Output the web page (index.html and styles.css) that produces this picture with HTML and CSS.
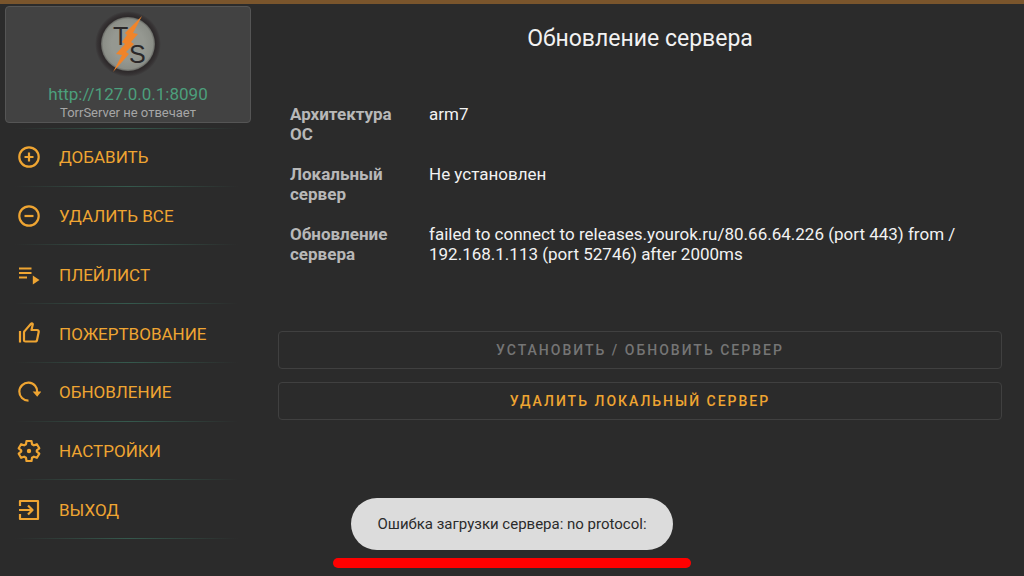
FILE: index.html
```html
<!DOCTYPE html>
<html lang="ru">

<head>
    <meta charset="UTF-8">
    <meta name="viewport" content="width=device-width, initial-scale=1.0">
    <title>TorrServer</title>
    <link rel="stylesheet" href="styles.css">
</head>

<body>
    <div class="status-bar"></div>
    <div class="app">
        <aside class="sidebar">
            <div class="server-card">
                <svg class="logo" viewBox="0 0 66 66" role="img" aria-label="TorrServer">
                    <defs>
                        <radialGradient id="rim">
                            <stop offset="0.84" stop-color="#2e2a2b" />
                            <stop offset="0.93" stop-color="#373435" />
                            <stop offset="1" stop-color="#424242" />
                        </radialGradient>
                        <radialGradient id="face">
                            <stop offset="0.6" stop-color="#959891" />
                            <stop offset="0.92" stop-color="#8b8e87" />
                            <stop offset="1" stop-color="#62635f" />
                        </radialGradient>
                    </defs>
                    <circle cx="33" cy="33" r="33" fill="url(#rim)" />
                    <circle cx="33" cy="33" r="27" fill="url(#face)" />
                    <text class="logo-letter" x="18" y="34">T</text>
                    <text class="logo-letter" x="34" y="52">S</text>
                    <path d="M47 5 L30 22 L32 24 L27 31 L30 33 L21 43 L27 44 L18 61 L34 43 L31 41 L39 33 L36 31 L43 23 L38 22 Z" fill="#f0842a" />
                </svg>
                <div class="server-url">http://127.0.0.1:8090</div>
                <div class="server-status">TorrServer не отвечает</div>
            </div>
            <nav class="menu">
                <button class="menu-item">
                    <svg class="icon" viewBox="0 0 24 24"><circle cx="12" cy="12" r="9.7" /><path d="M12 7.5v9M7.5 12h9" /></svg>
                    Добавить
                </button>
                <button class="menu-item">
                    <svg class="icon" viewBox="0 0 24 24"><circle cx="12" cy="12" r="9.7" /><path d="M7.5 12h9" /></svg>
                    Удалить все
                </button>
                <button class="menu-item">
                    <svg class="icon" viewBox="0 0 24 24"><path d="M2 5.500h12.500M2 10h12.500M2 14.500h8" /><path class="solid" d="M15.800 12.500v9l6.700-4.500z" /></svg>
                    Плейлист
                </button>
                <button class="menu-item">
                    <svg class="icon" viewBox="0 0 24 24"><path d="M3 9v11.500M7 18.500V10.500c0-.6.200-1 .6-1.400L14 1.700c.8-.8 2 0 1.700 1.100L14.500 8H20c1.300 0 1.900.9 1.700 2.100l-1.600 7.600c-.2 1.200-.9 1.800-2 1.800H8.500c-1 0-1.500-.4-1.500-1z" /></svg>
                    Пожертвование
                </button>
                <button class="menu-item">
                    <svg class="icon" viewBox="0 0 24 24"><path d="M11.500 20.700A9 9 0 1 1 20.300 12.500" /><path class="solid" d="M15.600 11.500h8.800l-4.200 5.200z" /></svg>
                    Обновление
                </button>
                <button class="menu-item">
                    <svg class="icon" viewBox="0 0 24 24"><path d="M9.500 2h5l.5 3.200 1.900 1.100 3-1.100 2.400 4.100-2.500 2v1.400l2.500 2-2.400 4.100-3-1.100-1.900 1.100-.5 3.200h-5L9 18.800l-1.900-1.100-3 1.100-2.400-4.100 2.500-2v-1.400l-2.500-2 2.400-4.100 3 1.100L9 5.200z" /><circle class="solid" cx="12" cy="12" r="2.200" /></svg>
                    Настройки
                </button>
                <button class="menu-item">
                    <svg class="icon" viewBox="0 0 24 24"><path d="M3 8V3h18v18H3v-5M2 12h13M11 7.500l4.500 4.500-4.500 4.500" /></svg>
                    Выход
                </button>
            </nav>
        </aside>

        <main class="content">
            <h1>Обновление сервера</h1>
            <dl class="info">
                <dt>Архитектура ОС</dt>
                <dd>arm7</dd>
                <dt>Локальный сервер</dt>
                <dd>Не установлен</dd>
                <dt>Обновление сервера</dt>
                <dd>failed to connect to releases.yourok.ru/80.66.64.226 (port 443) from / 192.168.1.113 (port 52746) after 2000ms</dd>
            </dl>
            <div class="actions">
                <button class="action" disabled>Установить / обновить сервер</button>
                <button class="action">Удалить локальный сервер</button>
            </div>
        </main>
    </div>

    <div class="toast-area">
        <div class="toast" role="status">Ошибка загрузки сервера: no protocol:</div>
        <div class="underline"></div>
    </div>
</body>

</html>
```

FILE: styles.css
```css
* {
    margin: 0;
    padding: 0;
    box-sizing: border-box;
}

body {
    display: flex;
    flex-direction: column;
    min-height: 100vh;
    background: #2b2b2b;
    color: #f2f2f2;
    font-family: Roboto, "Liberation Sans", sans-serif;
    font-size: 17px;
    line-height: 20px;
}

button {
    border: none;
    background: none;
    font-family: inherit;
    text-transform: uppercase;
    cursor: pointer;
}

.status-bar {
    height: 4px;
    background: #7a552c;
}

.app {
    flex: 1;
    display: flex;
}

.sidebar {
    flex: 0 0 251px;
    display: flex;
    flex-direction: column;
    padding: 2px 0 37px 5px;
}

.server-card {
    display: flex;
    flex-direction: column;
    align-items: center;
    padding: 4px 0 0;
    border: 1px solid #555;
    border-radius: 4px;
    background: #424242;
}

.logo {
    width: 66px;
    height: 66px;
}

.logo-letter {
    fill: #2b2829;
    font-family: "Liberation Sans", sans-serif;
    font-size: 25px;
}

.server-url {
    margin-top: 7px;
    color: #4c9f7c;
}

.server-status {
    color: #a6a6a6;
    font-size: 13px;
    line-height: 18px;
}

.menu {
    flex: 1;
    display: flex;
    flex-direction: column;
    margin-top: 5px;
    background: linear-gradient(to right, transparent 4%, #35594d 50%, transparent 95%) top / 100% 1px no-repeat;
}

.menu-item {
    flex: 1;
    display: flex;
    align-items: center;
    gap: 18px;
    padding-left: 12px;
    background: linear-gradient(to right, transparent 4%, #35594d 50%, transparent 95%) bottom / 100% 1px no-repeat;
    color: #efa532;
    font-size: 17px;
}

.icon {
    width: 24px;
    height: 24px;
    fill: none;
    stroke: #efa532;
    stroke-width: 2.2;
    stroke-linejoin: round;
}

.icon .solid {
    fill: #efa532;
    stroke: none;
}

.content {
    flex: 1;
    padding: 20px 22px 0 27px;
}

h1 {
    font-size: 23px;
    font-weight: 400;
    line-height: 30px;
    text-align: center;
}

.info {
    display: grid;
    grid-template-columns: 115px 1fr;
    gap: 20px 24px;
    padding: 50px 12px 0;
}

dt {
    color: #b8b8b8;
    font-weight: 700;
}

.actions {
    display: flex;
    flex-direction: column;
    gap: 13px;
    margin-top: 67px;
}

.action {
    height: 38px;
    border: 1px solid #404040;
    border-radius: 4px;
    color: #efa532;
    font-size: 14px;
    font-weight: 500;
    letter-spacing: 2px;
}

.action:disabled {
    color: #757575;
    cursor: default;
}

.toast-area {
    position: fixed;
    left: 0;
    right: 0;
    bottom: 8px;
    display: flex;
    flex-direction: column;
    align-items: center;
    gap: 8px;
}

.toast {
    padding: 16px 26px;
    border-radius: 26px;
    background: #dcdcdc;
    color: #2b2b2b;
    font-size: 15px;
}

.underline {
    width: 358px;
    height: 10px;
    border-radius: 5px;
    background: #f00;
}
```
